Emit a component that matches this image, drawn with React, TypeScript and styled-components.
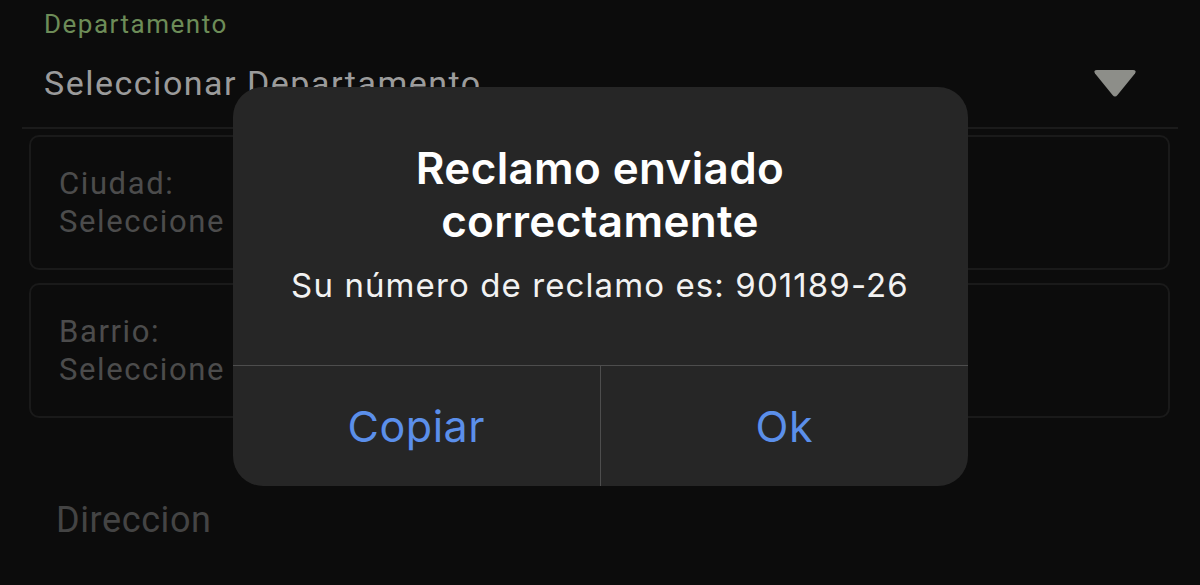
import styled, { createGlobalStyle } from "styled-components"

const GlobalStyle = createGlobalStyle`
  html, body {
    margin: 0;
    padding: 0;
    background: #0c0c0c;
  }
  body {
    width: 1200px;
    height: 585px;
    overflow: hidden;
    font-family: Roboto, "Liberation Sans", sans-serif;
  }
`

const Screen = styled.div`
  position: relative;
  width: 1200px;
  height: 585px;
  background: #0c0c0c;
`

const Form = styled.div`
  display: flex;
  flex-direction: column;
  padding-top: 9px;
`

const FieldLabel = styled.div`
  margin-left: 44px;
  font-size: 26px;
  line-height: 30px;
  color: #6d8c58;
  letter-spacing: 1.5px;
`

const SelectRow = styled.div`
  display: flex;
  align-items: center;
  justify-content: space-between;
  margin: 22px 22px 0;
  padding: 0 40px 22px 22px;
  border-bottom: 2px solid #1b1b1b;
`

const SelectText = styled.span`
  font-size: 34px;
  line-height: 44px;
  color: #9b9b9b;
  letter-spacing: 1.5px;
`

const Card = styled.div`
  display: flex;
  flex-direction: column;
  margin: ${({ $top }: { $top: number }) => $top}px 30px 0 29px;
  padding: 28px 28px 27px;
  border: 2px solid #1a1a1a;
  border-radius: 10px;
  font-size: 31px;
  line-height: 38px;
  color: #4c4c4c;
  letter-spacing: 1.6px;
`

const Placeholder = styled.div`
  margin: 81px 0 0 56px;
  font-size: 36px;
  line-height: 42px;
  color: #444444;
  letter-spacing: 0.6px;
`

const Overlay = styled.div`
  position: absolute;
  inset: 0;
  display: flex;
  justify-content: center;
  align-items: flex-start;
  padding-top: 87px;
`

const Dialog = styled.div`
  width: 735px;
  border-radius: 30px;
  background: #262626;
  overflow: hidden;
  font-family: Inter, "Liberation Sans", sans-serif;
  text-align: center;
`

const Body = styled.div`
  padding: 55px 20px 62px;
  border-bottom: 1px solid #4d4d4d;
`

const Title = styled.div`
  font-size: 44px;
  line-height: 53px;
  font-weight: 600;
  color: #ffffff;
  letter-spacing: 0.35px;
`

const Message = styled.div`
  margin-top: 19px;
  font-size: 33px;
  line-height: 36px;
  color: #f2f2f2;
  letter-spacing: 1.1px;
`

const Actions = styled.div`
  display: grid;
  grid-template-columns: 1fr 1fr;
  height: 120px;
`

const Action = styled.div`
  display: flex;
  align-items: center;
  justify-content: center;
  font-size: 43px;
  color: #5b8fea;
  letter-spacing: 0.5px;
  & + & {
    border-left: 1px solid #4d4d4d;
  }
`

function Caret() {
  return (
    <svg width="46" height="30" viewBox="0 0 46 30">
      <path
        d="M5 2 H41 Q45 2 43 5.5 L25.5 27 Q23 30 20.5 27 L3 5.5 Q1 2 5 2 Z"
        fill="#8d8e89"
      />
    </svg>
  )
}

function App() {
  return (
    <Screen>
      <GlobalStyle />
      <Form>
        <FieldLabel>Departamento</FieldLabel>
        <SelectRow>
          <SelectText>Seleccionar Departamento</SelectText>
          <Caret />
        </SelectRow>
        <Card $top={6}>
          <span>Ciudad:</span>
          <span>Seleccione</span>
        </Card>
        <Card $top={13}>
          <span>Barrio:</span>
          <span>Seleccione</span>
        </Card>
        <Placeholder>Direccion</Placeholder>
      </Form>
      <Overlay>
        <Dialog>
          <Body>
            <Title>
              Reclamo enviado
              <br />
              correctamente
            </Title>
            <Message>Su número de reclamo es: 901189-26</Message>
          </Body>
          <Actions>
            <Action>Copiar</Action>
            <Action>Ok</Action>
          </Actions>
        </Dialog>
      </Overlay>
    </Screen>
  )
}

export default App
